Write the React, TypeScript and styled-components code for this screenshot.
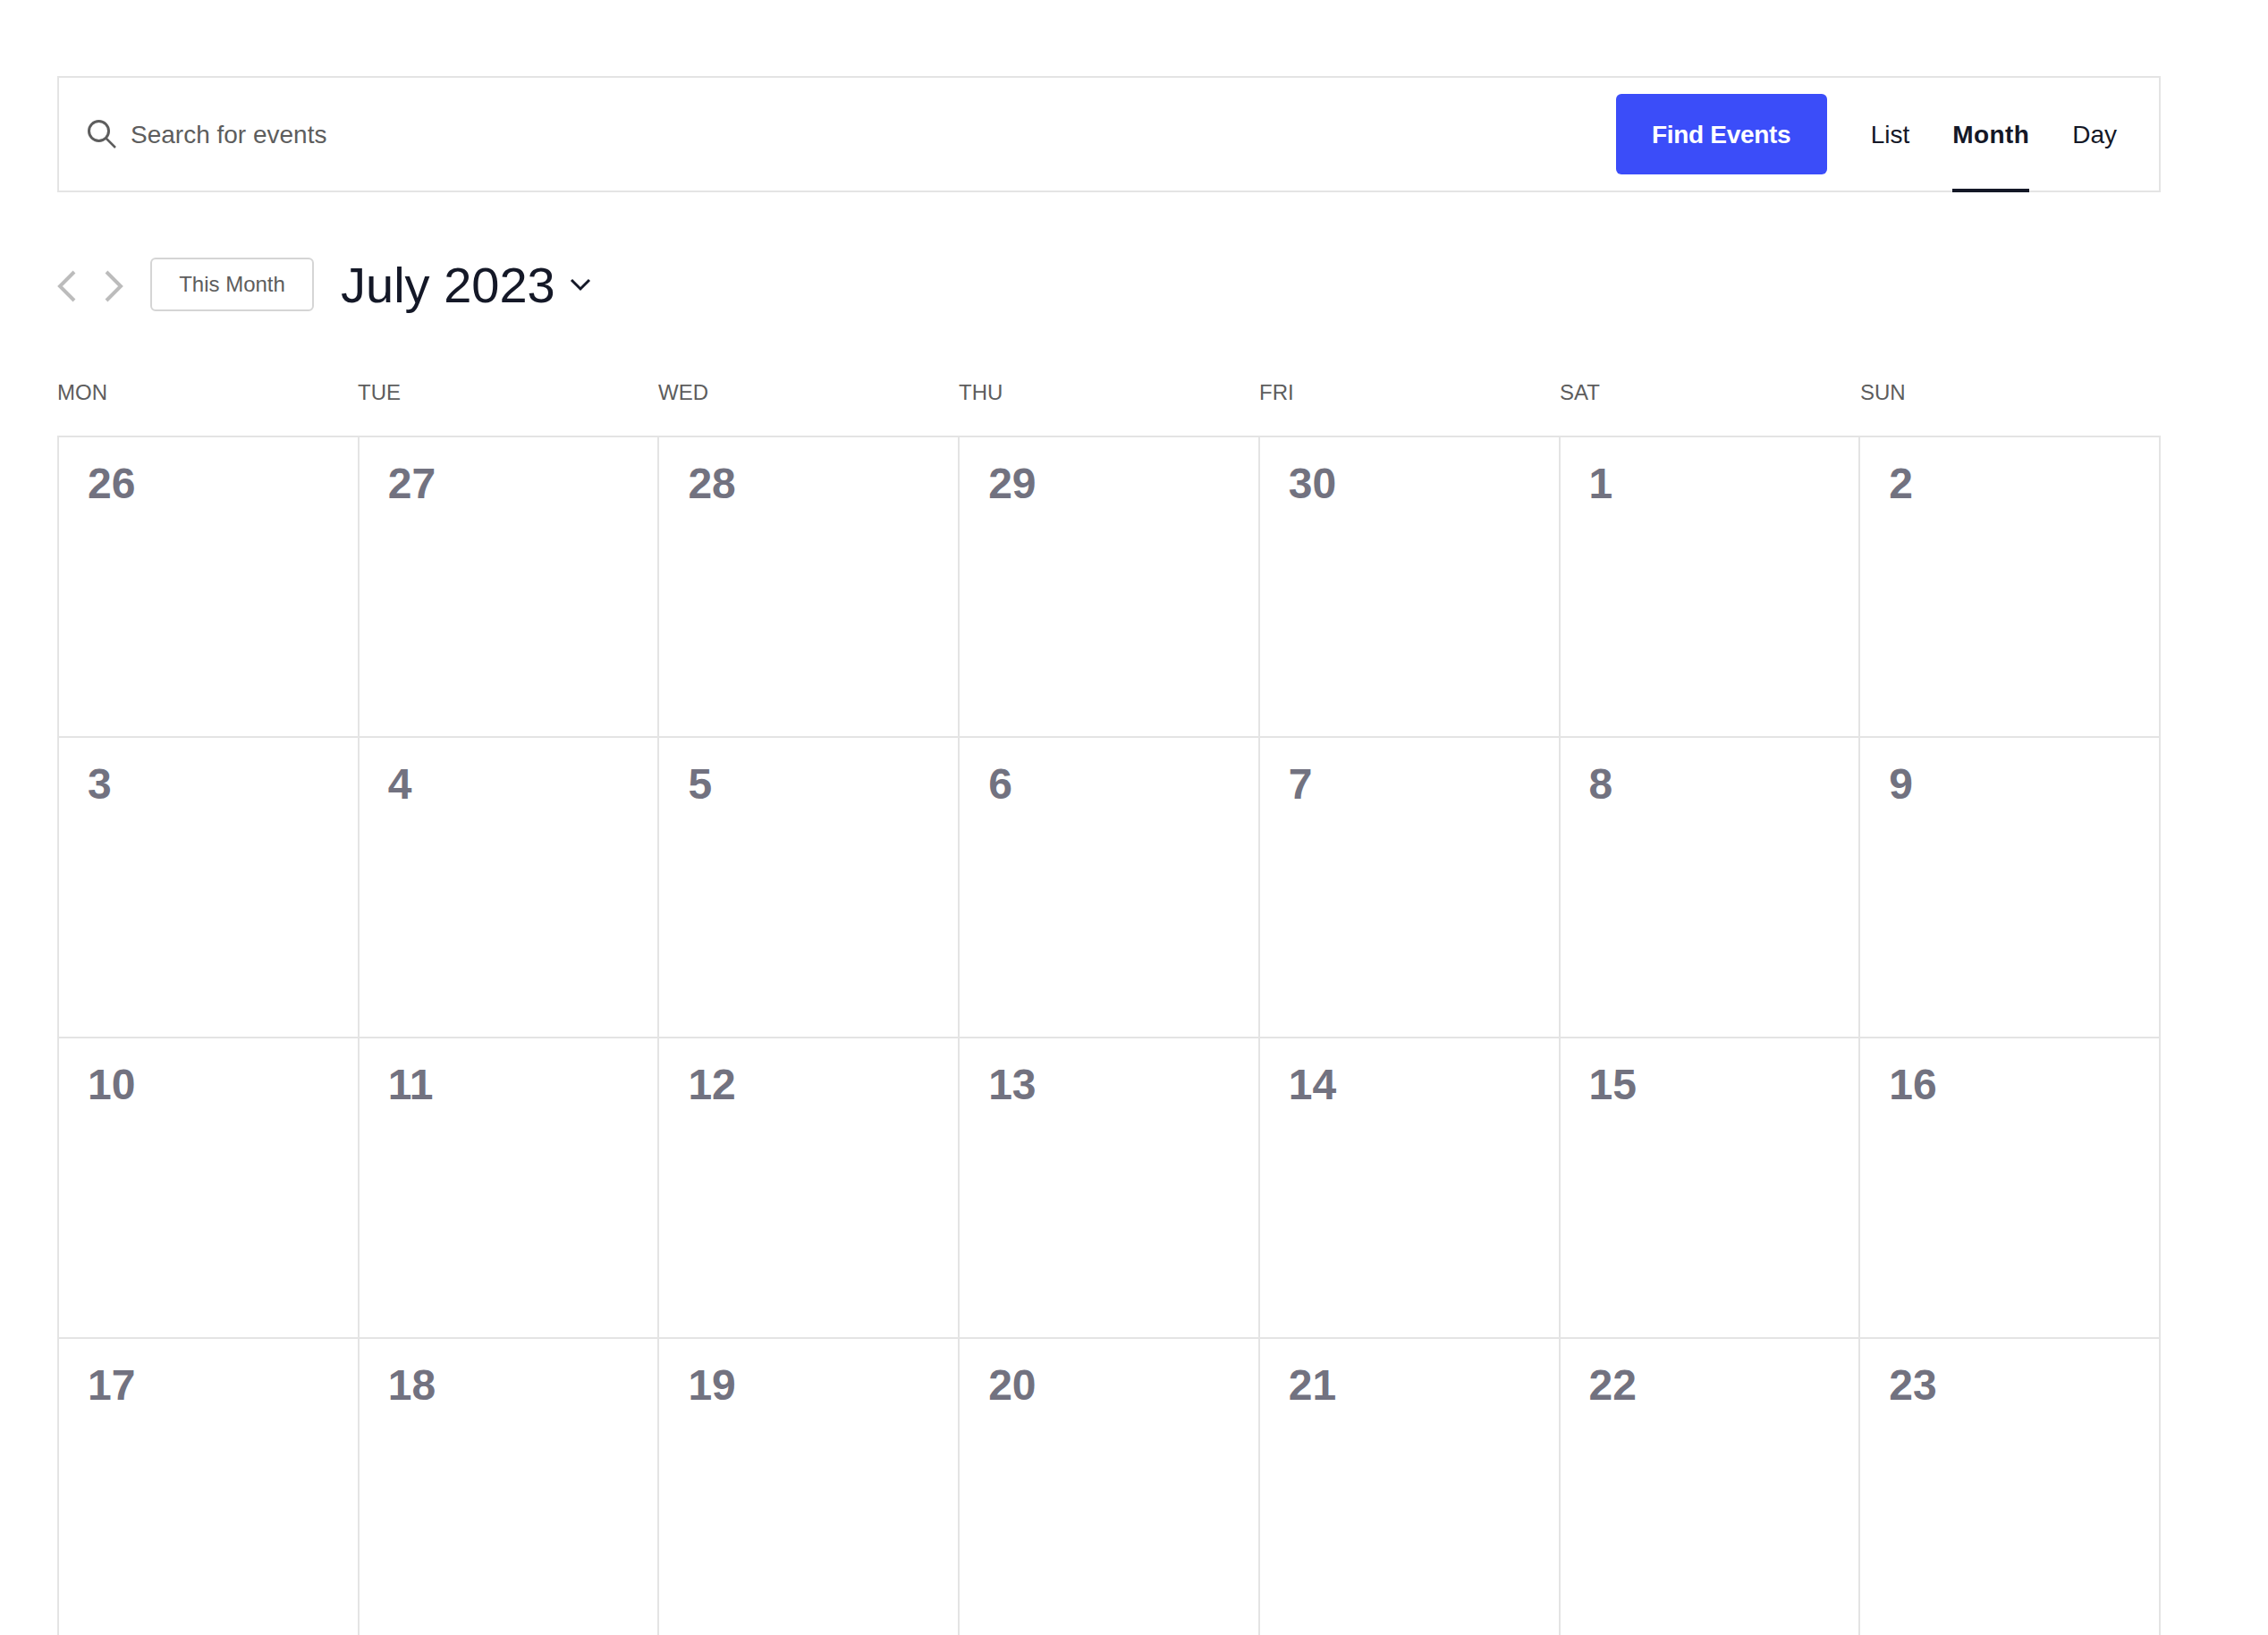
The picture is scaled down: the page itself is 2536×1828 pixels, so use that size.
import React from 'react';
import styled, { createGlobalStyle } from 'styled-components';

const days = ['MON', 'TUE', 'WED', 'THU', 'FRI', 'SAT', 'SUN'];
const dates = [
  26, 27, 28, 29, 30, 1, 2,
  3, 4, 5, 6, 7, 8, 9,
  10, 11, 12, 13, 14, 15, 16,
  17, 18, 19, 20, 21, 22, 23,
];

const GlobalStyle = createGlobalStyle`
  html, body {
    margin: 0;
    height: 1828px;
    overflow: hidden;
    background: #fff;
  }
  * {
    box-sizing: border-box;
  }
  body {
    font-family: "Liberation Sans", Arial, sans-serif;
    color: #141827;
  }
`;

const Page = styled.main`
  padding: 85px 120px 0 64px;
`;

const SearchBar = styled.header`
  display: flex;
  align-items: center;
  height: 130px;
  padding: 0 47px 0 30px;
  border: 2px solid #e4e4e4;
`;

const SearchIcon = styled.svg`
  width: 36px;
  height: 36px;
  flex: none;
  color: #5d5d5d;
`;

const SearchText = styled.span`
  flex: 1;
  margin-left: 14px;
  padding-top: 2px;
  font-size: 28px;
  color: #5d5d5d;
`;

const FindButton = styled.button`
  width: 236px;
  height: 90px;
  margin-right: 49px;
  padding: 2px 0 0;
  border: 0;
  border-radius: 6px;
  background: #3b4df9;
  color: #fff;
  font: bold 28px "Liberation Sans", Arial, sans-serif;
  letter-spacing: -0.3px;
`;

const ViewTabs = styled.nav`
  display: flex;
  align-items: center;
  align-self: stretch;
  gap: 48px;
`;

const ViewTab = styled.a<{ $active?: boolean }>`
  position: relative;
  display: flex;
  align-items: center;
  height: 100%;
  padding-top: 2px;
  font-size: 28px;
  font-weight: ${({ $active }) => ($active ? 700 : 400)};
  letter-spacing: ${({ $active }) => ($active ? '0.4px' : 'normal')};

  &::after {
    content: '';
    display: ${({ $active }) => ($active ? 'block' : 'none')};
    position: absolute;
    left: 0;
    right: 0;
    bottom: -2px;
    height: 4px;
    background: #141827;
  }
`;

const Toolbar = styled.div`
  display: flex;
  align-items: center;
  height: 60px;
  margin-top: 73px;
`;

const Arrow = styled.svg`
  width: 22px;
  height: 36px;
  flex: none;
  margin: 4px 30px 0 0;
  color: #bcbcbc;
`;

const TodayButton = styled.button`
  width: 183px;
  height: 60px;
  border: 2px solid #d5d5d5;
  border-radius: 6px;
  background: #fff;
  color: #5d5d5d;
  font: 24px "Liberation Sans", Arial, sans-serif;
`;

const MonthTitle = styled.h1`
  margin: 2px 0 0 30px;
  font-size: 56px;
  font-weight: 400;
  line-height: 60px;
`;

const Caret = styled.svg`
  width: 24px;
  height: 16px;
  margin-left: 16px;
  color: #141827;
`;

const WeekHeader = styled.div`
  display: grid;
  grid-template-columns: repeat(7, 1fr);
  margin-top: 77px;
  height: 62px;
`;

const WeekDay = styled.div`
  font-size: 24px;
  line-height: 28px;
  color: #5d5d5d;
`;

const CalendarGrid = styled.div`
  display: grid;
  grid-template-columns: repeat(7, 1fr);
  grid-auto-rows: 336px;
  border-top: 2px solid #e4e4e4;
  border-right: 2px solid #e4e4e4;
`;

const DayCell = styled.div`
  padding: 24px 32px;
  border-left: 2px solid #e4e4e4;
  border-bottom: 2px solid #e4e4e4;
  font-size: 48px;
  font-weight: 700;
  line-height: 56px;
  color: #727280;
`;

const App: React.FC = () => (
  <>
    <GlobalStyle />
    <Page>
      <SearchBar>
        <SearchIcon viewBox="0 0 36 36" fill="none" stroke="currentColor" strokeWidth="3">
          <circle cx="14.5" cy="14.5" r="11" />
          <path d="M22.5 22.5L33 33" strokeWidth="2.5" />
        </SearchIcon>
        <SearchText>Search for events</SearchText>
        <FindButton>Find Events</FindButton>
        <ViewTabs>
          <ViewTab>List</ViewTab>
          <ViewTab $active>Month</ViewTab>
          <ViewTab>Day</ViewTab>
        </ViewTabs>
      </SearchBar>

      <Toolbar>
        <Arrow viewBox="0 0 22 36" fill="none" stroke="currentColor" strokeWidth="4">
          <path d="M19 2L3 18l16 16" />
        </Arrow>
        <Arrow viewBox="0 0 22 36" fill="none" stroke="currentColor" strokeWidth="4">
          <path d="M3 2l16 16L3 34" />
        </Arrow>
        <TodayButton>This Month</TodayButton>
        <MonthTitle>July 2023</MonthTitle>
        <Caret viewBox="0 0 24 16" fill="none" stroke="currentColor" strokeWidth="3">
          <path d="M2 3l10 10L22 3" />
        </Caret>
      </Toolbar>

      <WeekHeader>
        {days.map((day) => (
          <WeekDay key={day}>{day}</WeekDay>
        ))}
      </WeekHeader>

      <CalendarGrid>
        {dates.map((date, index) => (
          <DayCell key={`${index}-${date}`}>{date}</DayCell>
        ))}
      </CalendarGrid>
    </Page>
  </>
);

export default App;
